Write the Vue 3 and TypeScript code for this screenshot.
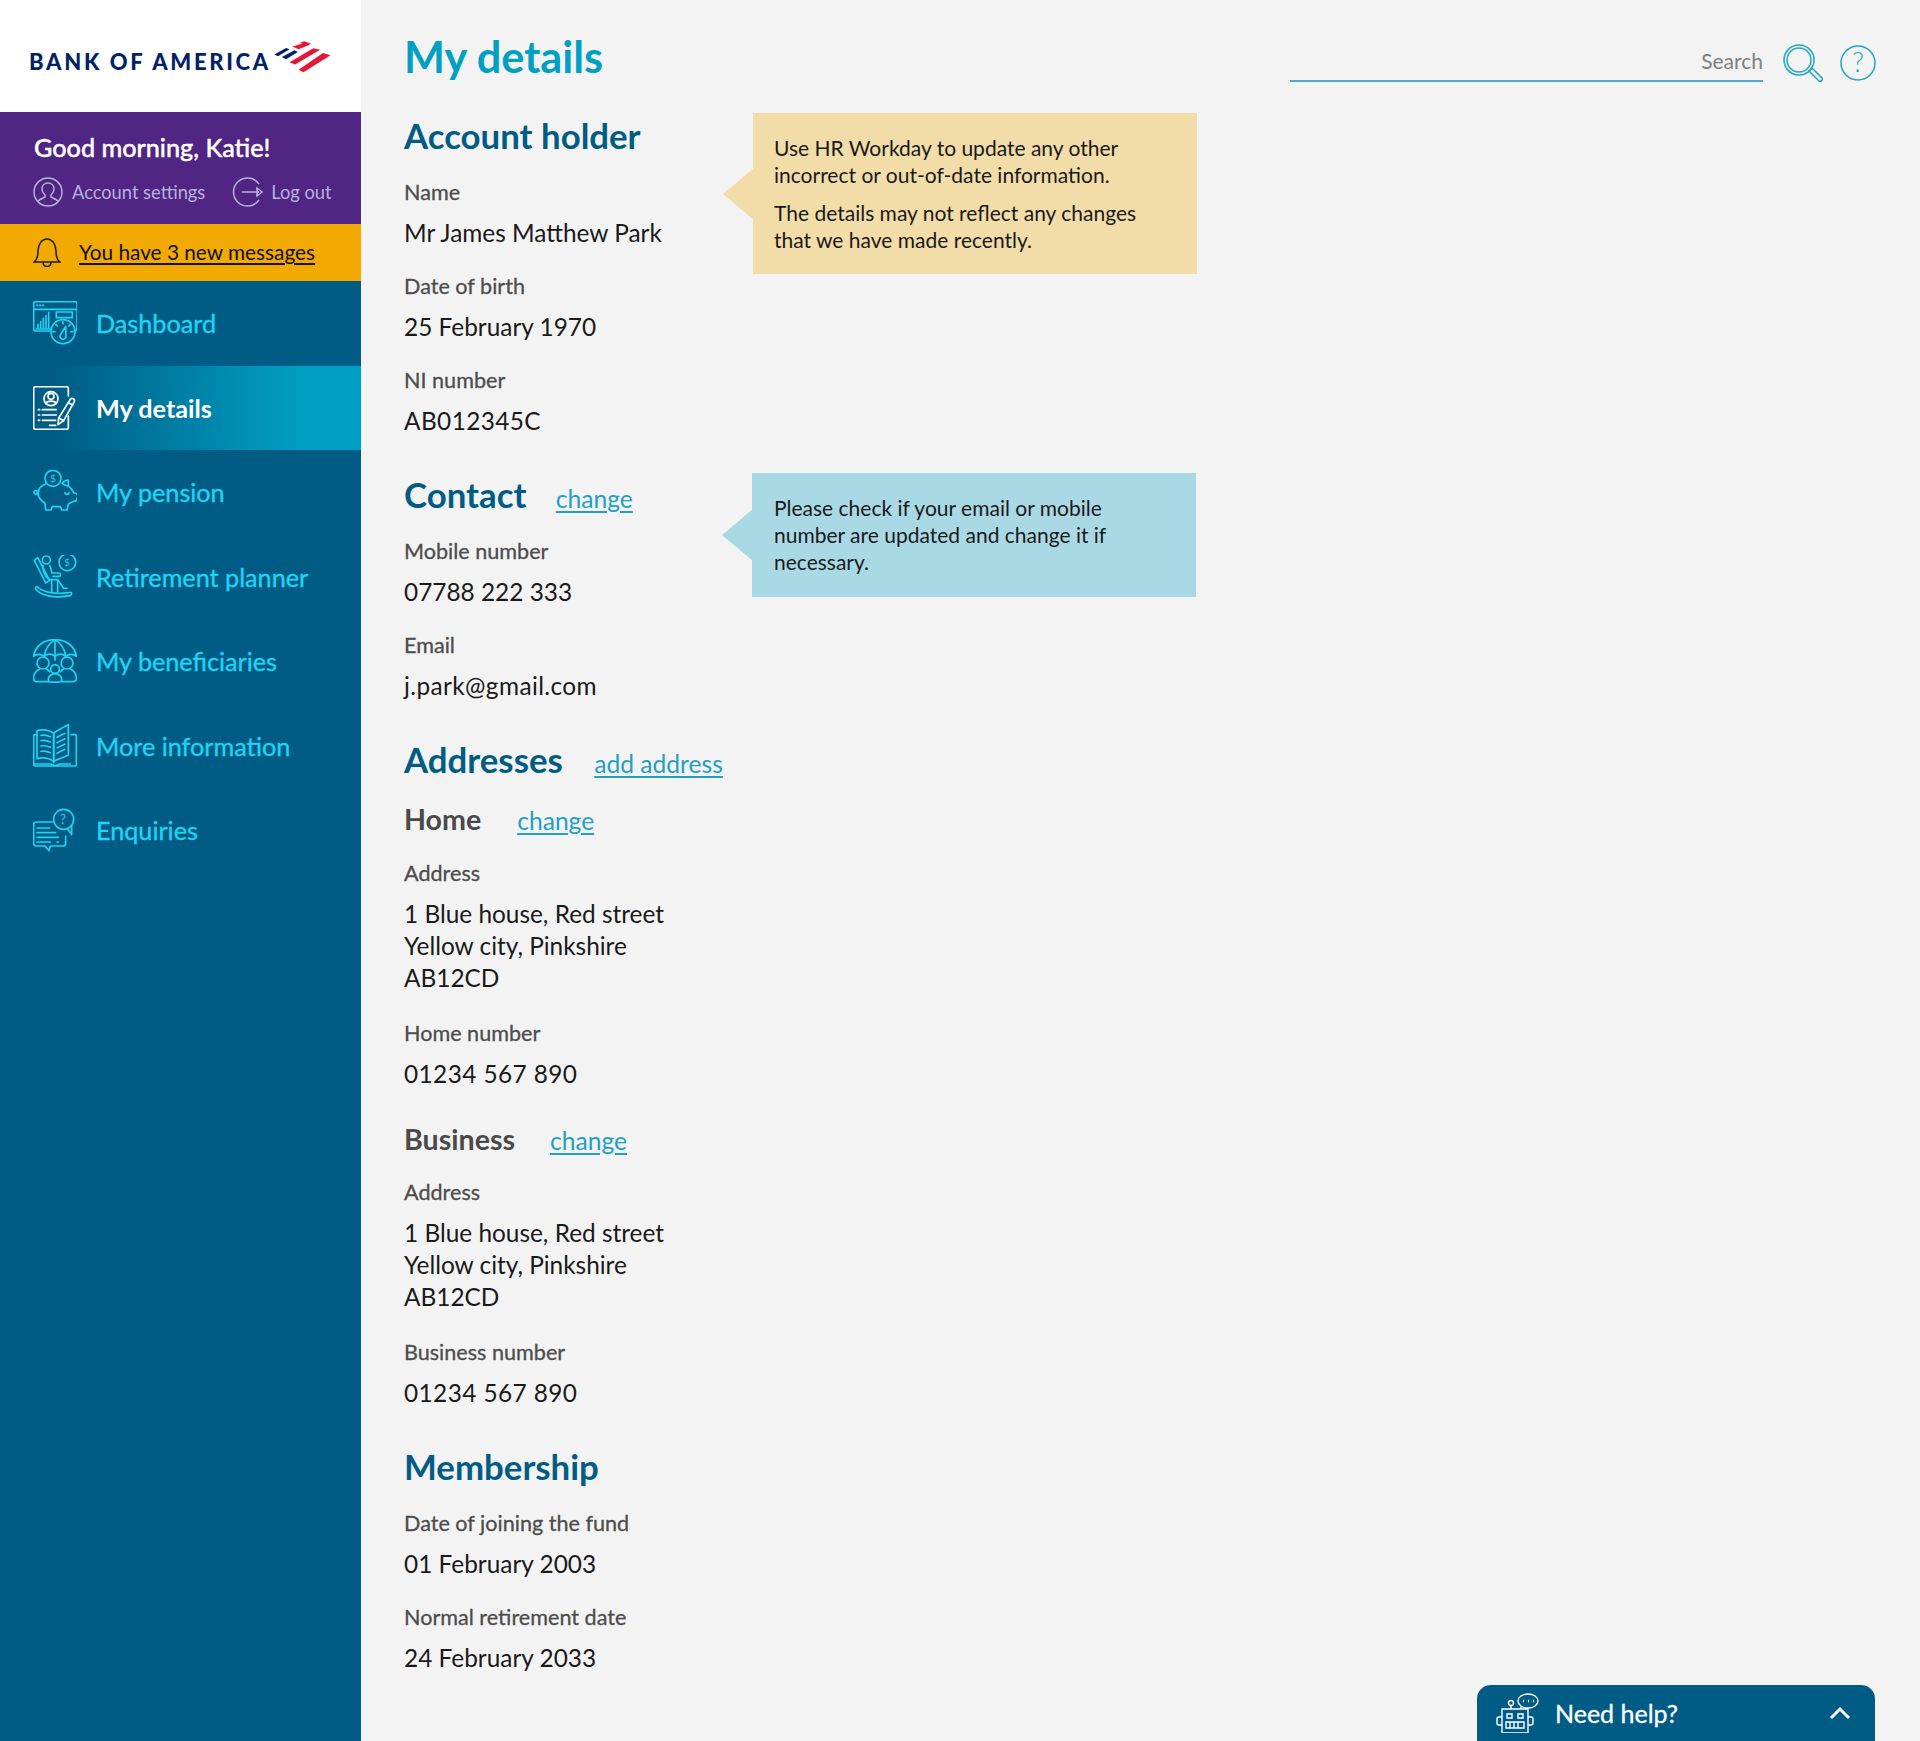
<script setup lang="ts">
type Glyph = { x: number; y: number; size: number; text: string };
type NavItem = { label: string; active?: boolean; paths: string[]; glyphs?: Glyph[] };
type Field = { label: string; lines: string[]; code?: boolean };

const circle = (cx: number, cy: number, r: number) =>
  `M${cx - r} ${cy}a${r} ${r} 0 1 0 ${2 * r} 0a${r} ${r} 0 1 0 ${-2 * r} 0`;

const navItems: NavItem[] = [
  {
    label: 'Dashboard',
    paths: [
      'M52 90H8a6 6 0 0 1-6-6V8a6 6 0 0 1 6-6h118a6 6 0 0 1 6 6v76a5 5 0 0 1-5 5',
      'M2 25h130', 'M11 13h3M20 13h3M29 13h3',
      'M15 80V70M23 80V62M31 80V52M39 80V44M47 80V34', 'M9 84h43',
      'M70 33h48v17H70z', circle(90, 92, 36),
      'M90 62v6M60 92h6M114 92h6M69 71l4 4M111 71l-4 4',
      'M98 76L84 99a9 9 0 1 0 15 6z',
    ],
  },
  {
    label: 'My details',
    active: true,
    paths: [
      'M106 30V8a6 6 0 0 0-6-6H8a6 6 0 0 0-6 6v116a6 6 0 0 0 6 6h92a6 6 0 0 0 6-6V90',
      circle(54, 38, 21), circle(54, 31, 9), 'M39 53c2-10 28-10 30 0',
      'M16 71h4M16 87h4M16 103h4M28 71h42M28 87h42M28 103h40M50 118h18',
      'M112 40a7 7 0 0 1 12 7L92 104l-17 12 2-20z', 'M77 96l15 8M106 50l13 7',
    ],
  },
  {
    label: 'My pension',
    paths: [
      circle(60, 25, 24),
      'M38 42C22 48 14 60 16 74c2 12 10 20 20 26l2 20h16l4-10h24l4 10h16l4-18c8-6 14-8 24-10l4-12v-8l-12-4c-4-10-10-16-16-20V30c-8 0-14 4-18 10',
      'M16 72C8 76 0 70 4 64s12 0 8 6', 'M96 68c0 6 12 6 12 0', 'M104 48c-6-2-10-4-14-6',
    ],
    glyphs: [{ x: 51, y: 36, size: 31, text: '$' }],
  },
  {
    label: 'Retirement planner',
    paths: [
      circle(103, 22, 25),
      'M4 16L14 8l36 68-12 8z', circle(40, 15, 12),
      'M30 32c-2 10 2 22 10 34 4 6 8 8 14 8h20l18 26h10',
      'M50 32c4 6 6 14 6 22h22c6 0 6 10 0 10H60',
      'M56 76v34M74 76v34',
      'M14 96c16 16 56 24 96 16 8-2 8 8 0 10-40 8-86 2-102-20-2-4 2-8 6-6z',
    ],
    glyphs: [{ x: 94, y: 32, size: 29, text: '$' }],
  },
  {
    label: 'My beneficiaries',
    paths: [
      'M2 52C6 22 32 2 66 2s60 20 64 50c-8-8-22-8-32 0-10-8-22-8-32 0-10-8-22-8-32 0-10-8-24-8-32 0z',
      'M66 2c-16 10-30 28-32 50M66 2c16 10 30 28 32 50M66 0v64',
      circle(30, 72, 18), 'M20 90C8 96 2 106 2 118c0 6 4 10 10 10h34', 'M40 90c4 2 8 5 10 8',
      circle(102, 72, 18), 'M112 90c12 6 18 16 18 28 0 6-4 10-10 10H86', 'M92 90c-4 2-8 5-10 8',
      circle(66, 90, 13), 'M48 128c-8-16 10-24 18-24s26 8 18 24c-2 2-34 2-36 0z',
    ],
  },
  {
    label: 'More information',
    paths: [
      'M62 112C48 102 28 100 12 104V20c16-4 36-2 50 8',
      'M62 28c8-8 26-16 44-26v92c-18 8-34 12-44 18z',
      'M12 32H6a4 4 0 0 0-4 4v86a4 4 0 0 0 4 4h120a4 4 0 0 0 4-4V36a4 4 0 0 0-4-4h-12',
      'M62 28v88M2 120h52c4 6 20 6 24 0h34',
      'M24 34c10-2 20 0 28 4M24 50c10-2 20 0 28 4M24 66c10-2 20 0 28 4M24 82c10-2 20 0 28 4',
      'M72 40l24-12M72 56l24-12M72 72l24-12M72 88l24-12',
    ],
  },
  {
    label: 'Enquiries',
    paths: [
      'M58 42H10a8 8 0 0 0-8 8v56a8 8 0 0 0 8 8h26l12 14 4-14h38a8 8 0 0 0 8-8V84',
      circle(92, 34, 30), 'M104 62l12 18v-26',
      'M12 60h38M12 74h56M12 88h64M12 102h40M72 102h4',
    ],
    glyphs: [{ x: 81, y: 49, size: 40, text: '?' }],
  },
];

const accountFields: Field[] = [
  { label: 'Name', lines: ['Mr James Matthew Park'] },
  { label: 'Date of birth', lines: ['25 February 1970'] },
  { label: 'NI number', lines: ['AB012345C'], code: true },
];

const contactFields: Field[] = [
  { label: 'Mobile number', lines: ['07788 222 333'] },
  { label: 'Email', lines: ['j.park@gmail.com'], code: true },
];

const addressLines = ['1 Blue house, Red street', 'Yellow city, Pinkshire', 'AB12CD'];

const membershipFields: Field[] = [
  { label: 'Date of joining the fund', lines: ['01 February 2003'] },
  { label: 'Normal retirement date', lines: ['24 February 2033'] },
];
</script>

<template>
  <div class="page">
    <aside class="sidebar">
      <div class="logo">
        <span class="logo__text">BANK OF AMERICA</span>
        <svg class="logo__flag" viewBox="0 0 210 135" width="73" height="47">
          <path fill="#012169" d="M18 56L52 37l10 4-33 20zM40 63l36-19 10 5-34 21z" />
          <path fill="#e31837" d="M92 22l12-4 20 7-12 4zM70 33l34-10 16 5-32 13zM62 78l68-40 20 4-72 43zM88 100l70-48 22 6-78 49z" />
        </svg>
      </div>

      <div class="greeting">
        <p class="greeting__hello">Good morning, Katie!</p>
        <div class="greeting__links">
          <span class="greeting__link">
            <svg viewBox="0 0 30 30" width="30" height="30" class="line-icon">
              <circle cx="15" cy="15" r="14" />
              <path d="M15 6c-4 0-6 3-6 6 0 3 2 5 3 6v2c-2 1-5 2-7 4M15 6c4 0 6 3 6 6 0 3-2 5-3 6v2c2 1 5 2 7 4" />
            </svg>
            Account settings
          </span>
          <span class="greeting__link greeting__link--logout">
            <svg viewBox="0 0 32 30" width="32" height="30" class="line-icon">
              <path d="M27 7A14 14 0 1 0 27 23M10 15h17M25 11l5 4-5 4z" />
            </svg>
            Log out
          </span>
        </div>
      </div>

      <div class="messages">
        <svg viewBox="0 0 28 30" width="28" height="30" class="bell">
          <path d="M1 25c3-2 4-5 4-11 0-7 4-12 9-12s9 5 9 12c0 6 1 9 4 11zM10 25c0 6 8 6 8 0" />
        </svg>
        <a class="messages__link">You have 3 new messages</a>
      </div>

      <nav class="nav">
        <a
          v-for="item in navItems"
          :key="item.label"
          class="nav__item"
          :class="{ 'nav__item--active': item.active }">
          <svg class="nav__icon" viewBox="0 0 132 132" width="44" height="44">
            <path v-for="(d, i) in item.paths" :key="i" :d="d" />
            <text
              v-for="g in item.glyphs"
              :key="g.text"
              :x="g.x"
              :y="g.y"
              :font-size="g.size"
              class="nav__glyph">{{ g.text }}</text>
          </svg>
          {{ item.label }}
        </a>
      </nav>
    </aside>

    <main class="main">
      <header class="topbar">
        <h1 class="topbar__title">My details</h1>
        <div class="topbar__tools">
          <div class="search">Search</div>
          <svg viewBox="0 0 40 38" width="40" height="38" class="tool-icon">
            <circle cx="16" cy="16" r="15" />
            <circle cx="16" cy="16" r="12" />
            <path d="M26 27l3-3 10 10c1 2-1 4-3 3z" />
          </svg>
          <svg viewBox="0 0 36 36" width="36" height="36" class="tool-icon tool-icon--help">
            <circle cx="18" cy="18" r="17" />
            <text x="18" y="27" text-anchor="middle" font-size="27" class="tool-icon__mark">?</text>
          </svg>
        </div>
      </header>

      <section class="section">
        <div class="section__fields">
          <h2 class="heading">Account holder</h2>
          <div v-for="field in accountFields" :key="field.label" class="field">
            <div class="field__label">{{ field.label }}</div>
            <div class="field__value" :class="{ 'field__value--code': field.code }">
              <div v-for="line in field.lines" :key="line">{{ line }}</div>
            </div>
          </div>
        </div>
        <div class="callout callout--yellow">
          <p>Use HR Workday to update any other<br />incorrect or out-of-date information.</p>
          <p>The details may not reflect any changes<br />that we have made recently.</p>
        </div>
      </section>

      <section class="section section--contact">
        <div class="section__fields section__fields--contact">
          <h2 class="heading">Contact <a class="change change--contact">change</a></h2>
          <div v-for="field in contactFields" :key="field.label" class="field">
            <div class="field__label">{{ field.label }}</div>
            <div class="field__value" :class="{ 'field__value--code': field.code }">
              <div v-for="line in field.lines" :key="line">{{ line }}</div>
            </div>
          </div>
        </div>
        <div class="callout callout--blue">
          <p>Please check if your email or mobile<br />number are updated and change it if<br />necessary.</p>
        </div>
      </section>

      <section class="section section--addresses">
        <div class="section__fields">
          <h2 class="heading">Addresses <a class="change change--add">add address</a></h2>

          <h3 class="subheading">Home <a class="change change--home">change</a></h3>
          <div class="field">
            <div class="field__label">Address</div>
            <div class="field__value">
              <div v-for="line in addressLines" :key="line">{{ line }}</div>
            </div>
          </div>
          <div class="field field--after-address">
            <div class="field__label">Home number</div>
            <div class="field__value field__value--code">01234 567 890</div>
          </div>

          <h3 class="subheading subheading--business">Business <a class="change change--business">change</a></h3>
          <div class="field">
            <div class="field__label">Address</div>
            <div class="field__value">
              <div v-for="line in addressLines" :key="line">{{ line }}</div>
            </div>
          </div>
          <div class="field field--after-address">
            <div class="field__label">Business number</div>
            <div class="field__value field__value--code">01234 567 890</div>
          </div>
        </div>
      </section>

      <section class="section section--addresses">
        <div class="section__fields">
          <h2 class="heading">Membership</h2>
          <div v-for="field in membershipFields" :key="field.label" class="field">
            <div class="field__label">{{ field.label }}</div>
            <div class="field__value">
              <div v-for="line in field.lines" :key="line">{{ line }}</div>
            </div>
          </div>
        </div>
      </section>

      <div class="help">
        <svg viewBox="0 0 44 40" width="44" height="40" class="help__icon">
          <path d="M7 16h26v24H7zM7 24H4a2 2 0 0 0-2 2v4a2 2 0 0 0 2 2h3M33 24h3a2 2 0 0 1 2 2v4a2 2 0 0 1-2 2h-3" />
          <path d="M12 21h5v4h-5zM23 21h5v4h-5zM11 29h18v6H11zM15 29v6M19 29v6M23 29v6" />
          <circle cx="16" cy="10" r="2.5" />
          <path d="M16 12v4M26 16V13" />
          <ellipse cx="33" cy="8" rx="10" ry="7" />
          <path d="M28 8h1M33 8h1M38 8h1" stroke-width="2.4" />
        </svg>
        <span class="help__label">Need help?</span>
        <svg viewBox="0 0 22 14" width="22" height="14" class="help__chevron">
          <path d="M2 12l9-9 9 9" />
        </svg>
      </div>
    </main>
  </div>
</template>

<style>
body {
  margin: 0;
  background: #f3f3f3;
}
</style>

<style scoped>
.page {
  display: flex;
  min-height: 1741px;
  font-family: Lato, "Noto Sans", sans-serif;
  color: #1a1a1a;
}

p, h1, h2, h3 {
  margin: 0;
}

.sidebar {
  flex: none;
  width: 361px;
  background: #005c84;
}

.logo {
  display: flex;
  align-items: flex-start;
  height: 112px;
  padding-left: 29px;
  box-sizing: border-box;
  background: #fff;
}

.logo__text {
  margin-top: 48px;
  font-size: 22px;
  line-height: 28px;
  font-weight: 900;
  letter-spacing: 2.7px;
  white-space: nowrap;
  color: #012169;
}

.logo__flag {
  margin: 35px 0 0 -3px;
}

.greeting {
  height: 112px;
  padding: 18px 0 0 34px;
  box-sizing: border-box;
  background: #512583;
}

.greeting__hello {
  font-size: 25.2px;
  line-height: 34px;
  font-weight: 500;
  color: #fff;
  -webkit-text-stroke: 0.4px #fff;
}

.greeting__links {
  display: flex;
  margin-top: 13px;
  margin-left: -1px;
}

.greeting__link {
  display: flex;
  align-items: center;
  gap: 9px;
  font-size: 18.3px;
  line-height: 30px;
  color: #b6b2de;
}

.greeting__link--logout {
  margin-left: 27px;
  gap: 7px;
}

.line-icon {
  fill: none;
  stroke: #b6b2de;
  stroke-width: 1.5;
}

.messages {
  display: flex;
  align-items: center;
  gap: 18px;
  height: 57px;
  padding: 0 0 2px 33px;
  box-sizing: border-box;
  background: #f2a900;
}

.bell {
  fill: none;
  stroke: #1a1a1a;
  stroke-width: 1.5;
}

.messages__link {
  font-size: 20.8px;
  color: #111;
  text-decoration: underline;
  text-underline-offset: 3px;
}

.nav__item {
  display: flex;
  align-items: center;
  gap: 19px;
  height: 84.5px;
  padding-left: 33px;
  box-sizing: border-box;
  font-size: 25.2px;
  color: #1fd4f4;
  -webkit-text-stroke: 0.35px currentColor;
}

.nav__icon {
  flex: none;
  fill: none;
  stroke: currentColor;
  stroke-width: 5;
  stroke-linejoin: round;
  stroke-linecap: round;
  -webkit-text-stroke: 0;
}

.nav__glyph {
  fill: currentColor;
  stroke: none;
}

.nav__item--active {
  color: #fff;
  font-weight: 700;
  -webkit-text-stroke: 0;
  background: linear-gradient(90deg, #005c84 15%, #00a0c4 85%);
}

.main {
  position: relative;
  flex: 1;
  padding: 29px 44px 0 43px;
}

.topbar {
  display: flex;
  justify-content: space-between;
  align-items: flex-start;
  margin-bottom: 28px;
}

.topbar__title {
  margin-top: -1px;
  margin-bottom: 1px;
  font-size: 43.3px;
  line-height: 56px;
  font-weight: 700;
  color: #00a0c4;
}

.topbar__tools {
  display: flex;
  align-items: flex-start;
  margin-top: 15px;
}

.search {
  width: 473px;
  height: 38px;
  box-sizing: border-box;
  padding-top: 4px;
  text-align: right;
  font-size: 21px;
  line-height: 26px;
  color: #808080;
  border-bottom: 2px solid #4fa8d0;
}

.tool-icon {
  flex: none;
  margin-left: 20px;
  fill: none;
  stroke: #1fa6c8;
  stroke-width: 1.5;
}

.tool-icon--help {
  margin-left: 17px;
  margin-top: 1px;
}

.tool-icon__mark {
  fill: #1fa6c8;
  stroke: none;
  font-weight: 300;
}

.section {
  display: flex;
  align-items: flex-start;
}

.section--contact,
.section--addresses {
  margin-top: 35px;
}

.section__fields {
  flex: none;
  width: 349px;
}

.section__fields--contact {
  width: 348px;
}

.heading {
  font-size: 34.8px;
  line-height: 46px;
  font-weight: 700;
  color: #005c84;
  white-space: nowrap;
}

.subheading {
  margin-top: 18px;
  font-size: 28.6px;
  line-height: 36px;
  font-weight: 700;
  color: #4a4a4a;
  white-space: nowrap;
}

.subheading--business {
  margin-top: 31px;
}

.field {
  margin-top: 24px;
}

.heading + .field {
  margin-top: 20px;
}

.subheading + .field {
  margin-top: 22.5px;
}

.field--after-address {
  margin-top: 26px;
}

.field__label {
  font-size: 21.6px;
  line-height: 26px;
  color: #4d4d4d;
  white-space: nowrap;
  -webkit-text-stroke: 0.3px currentColor;
}

.field__value {
  margin-top: 12px;
  font-size: 24.4px;
  line-height: 32px;
  white-space: nowrap;
}

.field__value--code {
  letter-spacing: 0.4px;
}

.change {
  margin-left: 21px;
  font-size: 24.6px;
  line-height: 1;
  font-weight: 400;
  color: #1fa0c4;
  text-decoration: underline;
  text-underline-offset: 3px;
}

.change--add {
  margin-left: 23px;
}

.change--home {
  margin-left: 29px;
}

.change--business {
  margin-left: 28px;
}

.callout {
  position: relative;
  box-sizing: border-box;
  width: 444px;
  padding: 21px 21px;
  font-size: 21px;
  line-height: 27px;
}

.callout::before {
  content: "";
  position: absolute;
  left: -30px;
  top: 50%;
  transform: translateY(-50%);
  border-style: solid;
  border-width: 26px 31px 26px 0;
  border-color: transparent;
  border-right-color: inherit;
}

.callout p + p {
  margin-top: 11px;
}

.callout--yellow {
  height: 161px;
  background: #f2dca8;
  border-color: #f2dca8;
}

.callout--blue {
  height: 124px;
  margin-top: 1px;
  padding-left: 22px;
  background: #aad9e6;
  border-color: #aad9e6;
}

.help {
  position: absolute;
  right: 45px;
  bottom: 0;
  display: flex;
  align-items: center;
  box-sizing: border-box;
  width: 398px;
  height: 56px;
  padding: 0 24px 0 18px;
  border-radius: 14px 14px 0 0;
  background: #005c84;
  color: #fff;
}

.help__icon {
  flex: none;
  fill: none;
  stroke: #fff;
  stroke-width: 1.4;
}

.help__label {
  flex: 1;
  margin-left: 16px;
  font-size: 25px;
  -webkit-text-stroke: 0.3px #fff;
}

.help__chevron {
  flex: none;
  fill: none;
  stroke: #fff;
  stroke-width: 3;
}
</style>
